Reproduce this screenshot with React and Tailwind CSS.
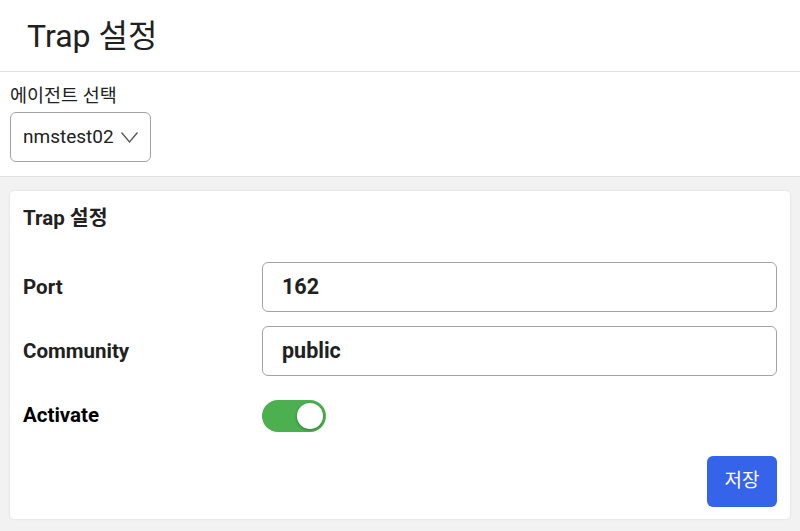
const font = { fontFamily: 'Roboto, "Noto Sans CJK KR", sans-serif' }

function Field({ value }) {
  return (
    <div className="flex h-[50px] items-center rounded-[6px] border border-[#a3a3a3] bg-white pl-[19px] text-[21.5px] font-bold text-[#212121]">
      {value}
    </div>
  )
}

export default function App() {
  return (
    <div className="flex h-[531px] w-[800px] flex-col bg-[#f2f2f2] text-[#212121]" style={font}>
      {/* Header */}
      <header className="flex h-[72px] shrink-0 items-center border-b border-[#e0e0e0] bg-white pl-[27px]">
        <h1 className="text-[32px] font-normal leading-none">Trap 설정</h1>
      </header>

      {/* Agent select */}
      <section className="shrink-0 border-b border-[#e0e0e0] bg-white px-[10px] pb-[14px] pt-[12px]">
        <div className="text-[18.5px] leading-[24px]">에이전트 선택</div>
        <div className="mt-[4px] flex h-[50px] w-[141px] items-center justify-between rounded-[6px] border border-[#a3a3a3] pl-[12px] pr-[12px] text-[19px]">
          <span>nmstest02</span>
          <svg width="17" height="11" viewBox="0 0 17 11" fill="none" stroke="#555" strokeWidth="1.3">
            <polyline points="0.5,0.5 8.5,10 16.5,0.5" />
          </svg>
        </div>
      </section>

      {/* Settings card */}
      <main className="px-[10px] pt-[14px]">
        <div className="rounded-[4px] bg-white px-[13px] pb-[12px] pt-[15px] shadow-[0_0_2px_rgba(0,0,0,0.15)]">
          <h2 className="text-[20.5px] font-bold leading-[24px]">Trap 설정</h2>

          <div className="mt-[32px] grid grid-cols-[239px_1fr] gap-y-[14px]">
            <div className="flex h-[50px] items-center text-[20.5px] font-bold">Port</div>
            <Field value="162" />

            <div className="flex h-[50px] items-center text-[20.5px] font-bold">Community</div>
            <Field value="public" />

            <div className="flex h-[50px] items-center text-[20.5px] font-bold text-black">Activate</div>
            <div className="flex h-[50px] items-center pt-[2px]">
              <div className="flex h-[32px] w-[64px] items-center justify-end rounded-full bg-[#4caf50] pr-[3px]">
                <div className="h-[26px] w-[26px] rounded-full bg-white shadow-[0_1px_3px_rgba(0,0,0,0.3)]" />
              </div>
            </div>
          </div>

          <div className="mt-[16px] flex justify-end">
            <button className="h-[51px] w-[70px] rounded-[6px] bg-[#3563e9] text-[19px] text-white">
              저장
            </button>
          </div>
        </div>
      </main>
    </div>
  )
}
